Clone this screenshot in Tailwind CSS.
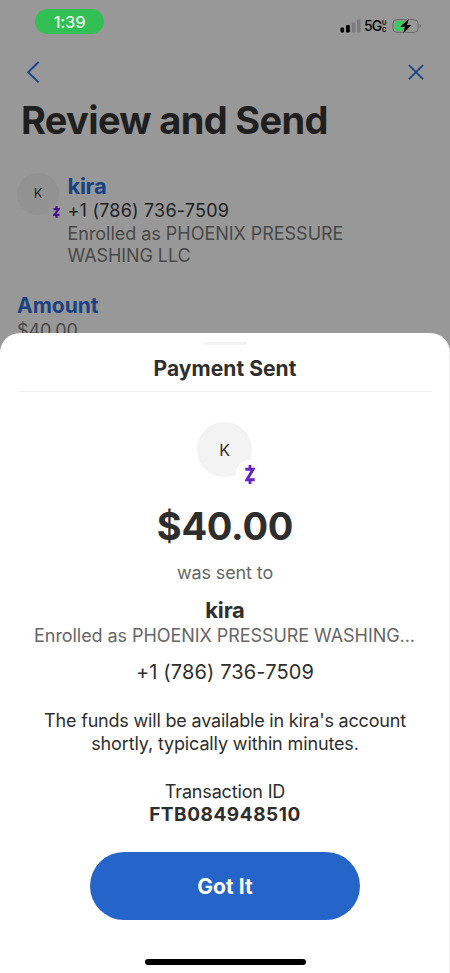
<!DOCTYPE html>
<html lang="en">
<head>
<meta charset="utf-8">
<title>Payment Sent</title>
<script src="https://cdn.jsdelivr.net/npm/@tailwindcss/browser@4"></script>
</head>
<body class="font-['Inter','Liberation_Sans',sans-serif] bg-[#989898]">
<div class="relative w-[450px] h-[973px] overflow-hidden bg-[#989898] text-[#1f1f1f]">

  <!-- Dimmed review screen -->
  <header class="flex items-start justify-between pl-[35px] pr-[28px] pt-[9px] h-[52px]">
    <div class="flex items-center justify-center w-[69px] h-[25px] rounded-full bg-[#32bf54] text-[#e4f7e8] text-[16.500px] font-medium tracking-[-0.250px] pt-px">1:39</div>
    <div class="flex items-center h-[33px] text-black">
      <svg class="w-[21px] h-[14px]" viewBox="0 0 21 14">
        <rect x="0.5" y="8.5" width="3.6" height="5" rx="1"/>
        <rect x="6" y="6" width="3.8" height="7.5" rx="1"/>
        <rect x="11.7" y="3.4" width="3.6" height="10.1" rx="1" fill="#7b7b7b"/>
        <rect x="17" y="0.6" width="3.6" height="12.9" rx="1" fill="#7b7b7b"/>
      </svg>
      <span class="ml-[3px] w-[17px] text-[14px] leading-none font-medium tracking-[-1px] whitespace-nowrap">5G</span>
      <span class="flex flex-col w-[6px] ml-px text-[6px] leading-[7px] font-bold"><span class="h-[7px]">U</span><span class="h-[7px]">C</span></span>
      <svg class="ml-[4px] w-[30px] h-[16px]" viewBox="0 0 30 16">
        <rect x="0.9" y="1.6" width="25.2" height="12.8" rx="4" fill="none" stroke="#6c6c6c" stroke-width="1"/>
        <path d="M5 3H14V13H5a2.500 2.500 0 0 1-2.500-2.500v-5A2.500 2.500 0 0 1 5 3Z" fill="#39cb5d"/>
        <path d="M27.700 6c1.400.600 1.400 3.600 0 4.200Z" fill="#6c6c6c"/>
        <path d="M16.800 0.800 8.300 8.700H13L11.300 15.200 19.500 7.100H15Z" fill="#000" stroke="#989898" stroke-width="1.200" paint-order="stroke"/>
      </svg>
    </div>
  </header>

  <nav class="flex items-center justify-between h-[40px] pl-[26px] pr-[25px] text-[#184589]">
    <svg class="w-[14px] h-[22px]" viewBox="0 0 14 22" fill="none" stroke="currentColor" stroke-width="1.900"><path d="M12.600 1 2.200 11.200 12.600 21.400"/></svg>
    <svg class="w-[18px] h-[18px]" viewBox="0 0 18 18" fill="none" stroke="currentColor" stroke-width="1.800"><path d="M2 2.200 16 16.200M16 2.200 2 16.200"/></svg>
  </nav>

  <h1 class="h-[56px] pl-[21px] text-[38px] leading-[57px] font-bold tracking-[-0.660px] whitespace-nowrap">Review and Send</h1>

  <section class="flex pl-[17px] pt-[25px] h-[144px]">
    <div class="relative w-[42px] h-[42px] rounded-full bg-[#929292] flex items-center justify-center text-[13px]">K
      <span class="absolute left-[31px] top-[30px] w-[17px] h-[17px] rounded-full bg-[#989898] flex items-center justify-center">
        <svg class="w-[7px] h-[12px]" viewBox="0 0 10 18" fill="none" stroke="#43118a" stroke-width="3.200"><path d="M0.500 4.600H8.300L1.700 13.400H9.500M5 0.300V4.600M5 13.400V17.700"/></svg>
      </span>
    </div>
    <div class="ml-[8.500px] text-[18px] leading-[22.500px] whitespace-nowrap">
      <div class="h-[27px] leading-[26px] text-[22px] font-bold tracking-[-0.300px] text-[#1a4282]">kira</div>
      <div class="tracking-[0.200px]">+1 (786) 736-7509</div>
      <div class="text-[#484848] tracking-[-0.030px]">Enrolled as PHOENIX PRESSURE<br><span class="tracking-[-0.080px]">WASHING LLC</span></div>
    </div>
  </section>

  <section class="pl-[17px] whitespace-nowrap">
    <div class="h-[28px] leading-[28px] text-[21px] font-bold text-[#1a4282]">Amount</div>
    <div class="leading-[22px] text-[18px] tracking-[-0.130px] text-[#484848]">$40.00</div>
  </section>

  <!-- Bottom sheet -->
  <main class="absolute inset-x-0 top-[333px] bottom-0 rounded-t-[20px] bg-white shadow-[inset_-1px_0_0_#ececec] flex flex-col items-center text-center text-[18px] text-[#2e2e2e] whitespace-nowrap">
    <div class="mt-[9px] w-[43px] h-[3px] rounded-full bg-[#f3f3f3]"></div>
    <h2 class="mt-[11px] h-[26px] leading-[26px] text-[21px] font-bold tracking-[0.050px]">Payment Sent</h2>
    <div class="mt-[9px] w-[414px] h-px bg-[#f1f1f1]"></div>
    <div class="relative mt-[30px] mr-px w-[55px] h-[55px] rounded-full bg-[#f3f3f3] flex items-center justify-center text-[16px]">K
      <span class="absolute left-[39px] top-[38px] w-[28px] h-[28px] rounded-full bg-white flex items-center justify-center">
        <svg class="w-[10px] h-[19px]" viewBox="0 0 10 18" preserveAspectRatio="none" fill="none" stroke="#6a1fc4" stroke-width="2.800"><path d="M0.300 4H8.200L1.800 14H9.700M5 0V4M5 14V18"/></svg>
      </span>
    </div>
    <div class="mt-[26px] h-[46px] leading-[46px] text-[38px] font-bold tracking-[-0.260px]">$40.00</div>
    <div class="mt-[13px] h-[22px] leading-[22px] tracking-[-0.120px] text-[#666]">was sent to</div>
    <div class="mt-[13px] h-[26px] leading-[26px] text-[22px] font-bold tracking-[-0.200px]">kira</div>
    <div class="mt-px mr-px h-[22px] leading-[23px] tracking-[-0.060px] text-[#666]">Enrolled as PHOENIX PRESSURE WASHING...</div>
    <div class="mt-[14px] h-[24px] leading-[24px] text-[20px] tracking-[0.130px]">+1 (786) 736-7509</div>
    <p class="mt-[26px] h-[45px] leading-[22.500px] tracking-[-0.190px]">The funds will be available in kira's account<br><span class="tracking-[-0.136px]">shortly, typically within minutes.</span></p>
    <div class="mt-[25px] h-[22px] leading-[23px] tracking-[-0.160px]">Transaction ID</div>
    <div class="h-[24px] leading-[26px] text-[19px] font-bold tracking-[0.550px]">FTB084948510</div>
    <button class="mt-[26px] w-[270px] h-[68px] pt-px rounded-full bg-[#2565ca] text-white text-[21px] font-bold tracking-[0.050px]">Got It</button>
    <div class="mt-[39px] w-[161px] h-[6px] rounded-full bg-black"></div>
  </main>
</div>
</body>
</html>
